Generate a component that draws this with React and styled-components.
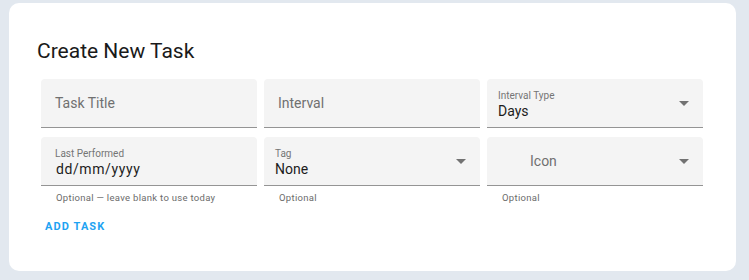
import React from "react";
import styled, { createGlobalStyle } from "styled-components";

const Global = createGlobalStyle`
  html, body { margin: 0; padding: 0; background: #e2e8ef; }
  body { font-family: Roboto, "Liberation Sans", sans-serif; }
  * { box-sizing: border-box; }
`;

const Page = styled.div`
  padding: 3px 13px 9px 9px;
  width: 749px;
  height: 280px;
`;

const Card = styled.div`
  background: #fff;
  border-radius: 10px;
  height: 268px;
  padding: 34px 33px 0 28px;
`;

const Title = styled.h2`
  margin: 0 0 14px 0;
  font-size: 21px;
  font-weight: 400;
  line-height: 28px;
  color: #1a1a1a;
`;

const Grid = styled.div`
  display: grid;
  grid-template-columns: repeat(3, 216px);
  column-gap: 7px;
  row-gap: 9px;
  margin-left: 4px;
`;

const Cell = styled.div`
  display: flex;
  flex-direction: column;
`;

const Field = styled.div`
  position: relative;
  height: 49px;
  background: #f4f4f4;
  border-radius: 4px 4px 0 0;
  border-bottom: 1px solid #949494;
  display: flex;
  flex-direction: column;
  justify-content: center;
  padding: 0 30px 0 ${(p) => p.$pad || 14}px;
`;

const Placeholder = styled.div`
  font-size: 14px;
  color: #707070;
  line-height: 16px;
`;

const SmallLabel = styled.div`
  font-size: 10px;
  line-height: 12px;
  color: #757575;
  margin-top: 4px;
`;

const Value = styled.div`
  font-size: 14px;
  line-height: 18px;
  color: #1c1c1c;
  letter-spacing: ${(p) => p.$ls || 0}px;
  padding-left: ${(p) => p.$indent || 0}px;
`;

const Arrow = styled.svg`
  position: absolute;
  right: 7px;
  top: 50%;
  margin-top: -12px;
  width: 24px;
  height: 24px;
  fill: #727272;
`;

const Helper = styled.div`
  font-size: 9.5px;
  line-height: 12px;
  letter-spacing: 0.3px;
  color: #6b6b6b;
  margin: 6px 0 0 15px;
`;

const Button = styled.button`
  margin: 12px 0 0 3px;
  padding: 4px 5px;
  background: none;
  border: none;
  font-family: Roboto, "Liberation Sans", sans-serif;
  font-weight: 700;
  font-size: 11px;
  letter-spacing: 1.1px;
  color: #1fa3f2;
  text-transform: uppercase;
  cursor: pointer;
`;

const DropIcon = () => (
  <Arrow viewBox="0 0 24 24">
    <path d="M7 10l5 5 5-5z" />
  </Arrow>
);

export default function App() {
  return (
    <>
      <Global />
      <Page>
        <Card>
          <Title>Create New Task</Title>
          <Grid>
            <Cell>
              <Field>
                <Placeholder>Task Title</Placeholder>
              </Field>
            </Cell>
            <Cell>
              <Field>
                <Placeholder>Interval</Placeholder>
              </Field>
            </Cell>
            <Cell>
              <Field $pad={11}>
                <SmallLabel>Interval Type</SmallLabel>
                <Value>Days</Value>
                <DropIcon />
              </Field>
            </Cell>
            <Cell>
              <Field>
                <SmallLabel>Last Performed</SmallLabel>
                <Value $ls={0.6} $indent={1}>dd/mm/yyyy</Value>
              </Field>
              <Helper>Optional — leave blank to use today</Helper>
            </Cell>
            <Cell>
              <Field $pad={11}>
                <SmallLabel>Tag</SmallLabel>
                <Value>None</Value>
                <DropIcon />
              </Field>
              <Helper>Optional</Helper>
            </Cell>
            <Cell>
              <Field $pad={43}>
                <Placeholder>Icon</Placeholder>
                <DropIcon />
              </Field>
              <Helper>Optional</Helper>
            </Cell>
          </Grid>
          <Button>Add Task</Button>
        </Card>
      </Page>
    </>
  );
}
